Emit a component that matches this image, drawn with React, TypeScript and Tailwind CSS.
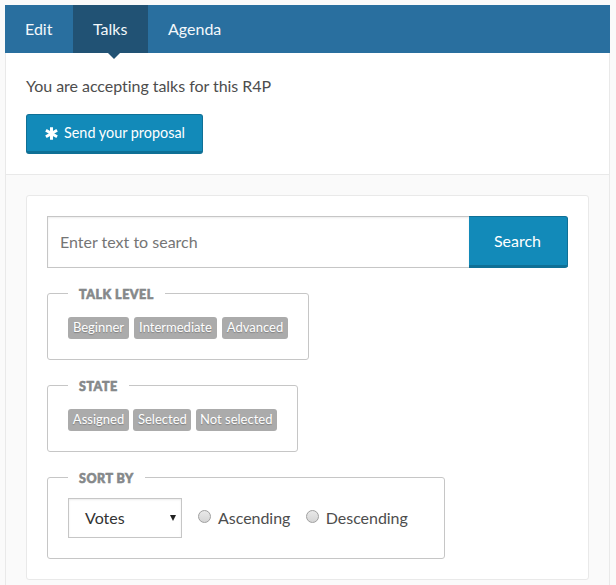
import type { ReactNode } from 'react';

function Tag({ children, width }: { children: ReactNode; width: string }) {
  return (
    <span
      className={`flex h-[22px] items-center justify-center whitespace-nowrap rounded-[3px] bg-[#ababab] pb-px text-[13px] text-white [text-shadow:0_1px_1px_rgba(0,0,0,0.25)] ${width}`}
    >
      {children}
    </span>
  );
}

function Group({ title, box, legend, children }: { title: string; box: string; legend: string; children: ReactNode }) {
  return (
    <section className={`rounded-[3px] border border-[#c6c6c6] ${box}`}>
      <h2
        className={`-mt-[7px] ml-5 flex h-3 items-center whitespace-nowrap bg-white pl-[11px] pt-[3px] text-[12.5px] font-black leading-3 tracking-[0.5px] text-[#85888a] [-webkit-text-stroke:0.6px_#85888a] ${legend}`}
      >
        {title}
      </h2>
      {children}
    </section>
  );
}

function Radio({ label }: { label: string }) {
  return (
    <label className="flex items-center">
      <span className="mb-1 mr-[7px] size-[13px] rounded-full border border-[#a0a0a0] bg-linear-to-b from-[#e9e9e9] to-[#d5d5d5]" />
      {label}
    </label>
  );
}

export default function App() {
  return (
    <div className="h-[585px] w-[616px] overflow-hidden bg-[#fafafa] px-[5px] pt-[5px] font-['Lato',sans-serif] text-base text-[#4d4d4d] [font-variant-ligatures:none]">
      <div className="h-[580px] w-[605px]">
        <nav className="flex h-12 bg-[#296f9f] leading-[48px] text-[#f3f8fb]">
          <a className="w-[68px] pl-5">Edit</a>
          <a className="relative w-[75px] bg-[#215274] pl-5">
            Talks
            <span className="absolute left-[35px] top-12 border-x-[6px] border-t-[6px] border-x-transparent border-t-[#215274]" />
          </a>
          <a className="pl-5">Agenda</a>
        </nav>
        <div className="h-[532px] border-x border-[#e9e9e9]">
          <header className="h-[122px] border-b border-[#e9e9e9] bg-white px-5 pt-[21px]">
            <p className="leading-6 tracking-[-0.04px]">You are accepting talks for this R4P</p>
            <button className="mt-4 flex h-10 w-[177px] items-center rounded-[3px] border border-b-[3px] border-[#0f7096] bg-[#128ab9] pl-[18px] text-[14.4px] text-white">
              <svg viewBox="0 0 14 14" className="mr-[6px] size-[13px]" stroke="currentColor" strokeWidth="3.2">
                <path d="M7 .2v13.6M1 3.55l12 6.9M1 10.45l12-6.9" />
              </svg>
              Send your proposal
            </button>
          </header>
          <main className="ml-5 mt-5 h-[385px] w-[563px] rounded-[3px] border border-[#e9e9e9] bg-white pl-5 pt-5">
            <div className="flex h-[52px] w-[521px]">
              <input
                placeholder="Enter text to search"
                className="h-[52px] w-[422px] border border-r-0 border-[#c6c6c6] bg-white pb-0.5 pl-3 shadow-[inset_0_1px_2px_rgba(0,0,0,0.08)] placeholder:text-[#757575]"
              />
              <button className="w-[99px] rounded-r-[3px] border border-b-[3px] border-l-0 border-[#0f7096] bg-[#128ab9] pr-1 text-white">
                <span className="ml-[3px]">Search</span>
              </button>
            </div>
            <div className="mt-[25px] flex flex-col gap-[25px]">
              <Group title="TALK LEVEL" box="h-[67px] w-[262px]" legend="w-[97px]">
                <div className="ml-5 mt-[18px] flex gap-[5px]">
                  <Tag width="w-[61px]">Beginner</Tag>
                  <Tag width="w-[83px]">Intermediate</Tag>
                  <Tag width="w-[66px]">Advanced</Tag>
                </div>
              </Group>
              <Group title="STATE" box="h-[67px] w-[251px]" legend="w-[61px]">
                <div className="ml-5 mt-[18px] flex gap-[4.4px]">
                  <Tag width="w-[61px]">Assigned</Tag>
                  <Tag width="w-[58px]">Selected</Tag>
                  <Tag width="w-[81px]">Not selected</Tag>
                </div>
              </Group>
              <Group title="SORT BY" box="h-[82px] w-[398px]" legend="w-[77px]">
                <div className="ml-5 mt-[15px] flex items-center">
                  <div className="mr-4 flex h-10 w-[114px] items-center justify-between border border-[#c6c6c6] pl-4 pr-[5px] text-[#333] shadow-[inset_0_1px_2px_rgba(0,0,0,0.08)]">
                    Votes
                    <span className="border-x-[3px] border-t-[6px] border-x-transparent border-t-[#222]" />
                  </div>
                  <div className="flex gap-[15.5px] tracking-[-0.04px]">
                    <Radio label="Ascending" />
                    <Radio label="Descending" />
                  </div>
                </div>
              </Group>
            </div>
          </main>
        </div>
      </div>
    </div>
  );
}
